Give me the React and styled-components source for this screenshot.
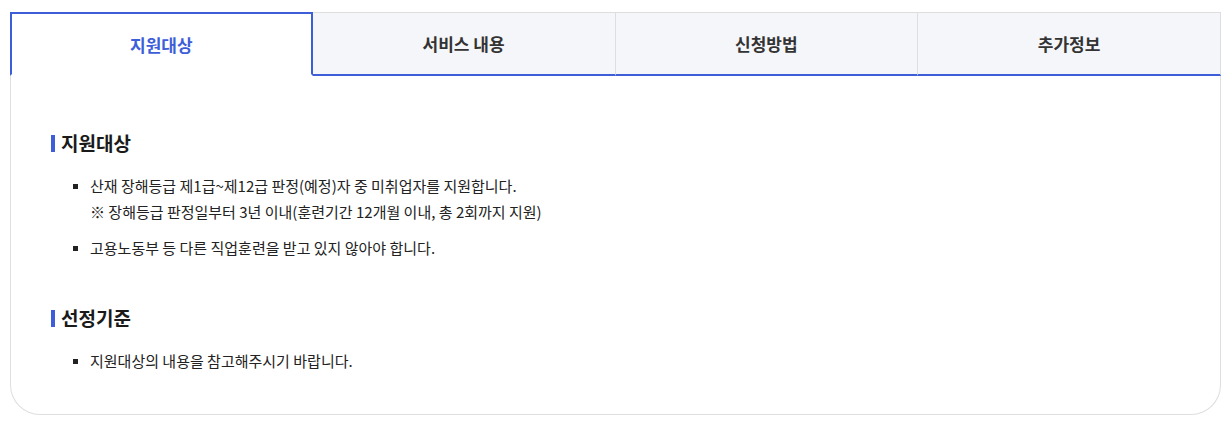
import React, { useState } from 'react';
import styled, { createGlobalStyle } from 'styled-components';

const BLUE = '#3d5ed8';

const GlobalStyle = createGlobalStyle`
  body {
    margin: 0;
    background: #fff;
    font-family: 'Noto Sans CJK KR', 'Noto Sans', sans-serif;
    color: #222;
  }
`;

const Page = styled.div`
  padding: 12px 11px 12px 10px;
`;

const Card = styled.div`
  border: 1px solid #dedede;
  border-top: none;
  border-radius: 0 0 30px 30px;
  background: #fff;
`;

const TabBar = styled.div`
  display: grid;
  grid-template-columns: repeat(4, 1fr);
  margin: 0 -1px;
`;

const Tab = styled.button`
  height: 64px;
  font-family: inherit;
  font-size: 17px;
  font-weight: 700;
  cursor: pointer;
  background: ${(p) => (p.active ? '#fff' : '#f5f6fa')};
  color: ${(p) => (p.active ? BLUE : '#333')};
  border: 1px solid #dedede;
  border-left: none;
  border-bottom: 2px solid ${BLUE};
  ${(p) => p.active && `
    border: 2px solid ${BLUE};
    border-bottom: 2px solid #fff;
  `}
  &:first-child {
    border-left: ${(p) => (p.active ? 2 : 1)}px solid ${(p) => (p.active ? BLUE : '#dedede')};
  }
`;

const Body = styled.div`
  padding: 54px 40px 40px 40px;
`;

const Section = styled.section`
  & + & {
    margin-top: 44px;
  }
`;

const Heading = styled.h3`
  display: flex;
  align-items: center;
  gap: 6px;
  margin: 0;
  font-size: 19px;
  line-height: 26px;
  font-weight: 700;
  color: #1a1a1a;
  &::before {
    content: '';
    width: 4px;
    height: 17px;
    background: ${BLUE};
  }
`;

const List = styled.ul`
  list-style: none;
  margin: 17px 0 0;
  padding: 0 0 0 22px;
`;

const Item = styled.li`
  position: relative;
  padding-left: 17px;
  font-size: 15px;
  line-height: 26px;
  color: #222;
  & + & {
    margin-top: 10px;
  }
  &::before {
    content: '';
    position: absolute;
    left: 0;
    top: 11px;
    width: 5px;
    height: 5px;
    background: #222;
  }
`;

const tabs = ['지원대상', '서비스 내용', '신청방법', '추가정보'];

export default function App() {
  const [active, setActive] = useState(0);
  return (
    <Page>
      <GlobalStyle />
      <Card>
        <TabBar>
          {tabs.map((t, i) => (
            <Tab key={t} active={i === active} onClick={() => setActive(i)}>
              {t}
            </Tab>
          ))}
        </TabBar>
        <Body>
          <Section>
            <Heading>지원대상</Heading>
            <List>
              <Item>
                산재 장해등급 제1급~제12급 판정(예정)자 중 미취업자를 지원합니다.
                <br />
                ※ 장해등급 판정일부터 3년 이내(훈련기간 12개월 이내, 총 2회까지 지원)
              </Item>
              <Item>고용노동부 등 다른 직업훈련을 받고 있지 않아야 합니다.</Item>
            </List>
          </Section>
          <Section>
            <Heading>선정기준</Heading>
            <List>
              <Item>지원대상의 내용을 참고해주시기 바랍니다.</Item>
            </List>
          </Section>
        </Body>
      </Card>
    </Page>
  );
}
